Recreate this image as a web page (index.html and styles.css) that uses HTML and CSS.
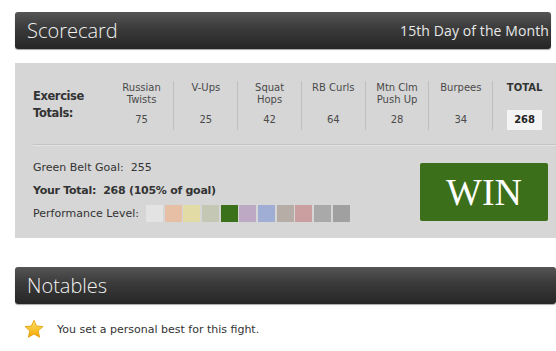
FILE: index.html
```html
<!DOCTYPE html>
<html>
<head>
<meta charset="utf-8">
<link rel="stylesheet" href="styles.css">
</head>
<body>
<div class="page">
  <div class="bar">
    <span class="bar-title">Scorecard</span>
    <span class="bar-date">15th Day of the Month</span>
  </div>
  <div class="panel">
    <div class="totals">
      <div class="label">Exercise<br>Totals:</div>
      <div class="col"><div class="head">Russian<br>Twists</div><div class="num">75</div></div>
      <div class="col sep"><div class="head">V-Ups</div><div class="num">25</div></div>
      <div class="col sep"><div class="head">Squat<br>Hops</div><div class="num">42</div></div>
      <div class="col sep"><div class="head">RB Curls</div><div class="num">64</div></div>
      <div class="col sep"><div class="head">Mtn Clm<br>Push Up</div><div class="num">28</div></div>
      <div class="col sep"><div class="head">Burpees</div><div class="num">34</div></div>
      <div class="col sep"><div class="head total-head">TOTAL</div><div class="num"><span class="total-box">268</span></div></div>
    </div>
    <div class="rule"></div>
    <div class="result">
      <div class="stats">
        <div class="line">Green Belt Goal:&nbsp; 255</div>
        <div class="line bold">Your Total:&nbsp; 268 (105% of goal)</div>
        <div class="line perf">Performance Level:
          <span class="swatches">
            <i style="background:#e3e3e3"></i><i style="background:#e6bfa5"></i><i style="background:#e3dba6"></i><i style="background:#c4c7b4"></i><i style="background:#3a711a"></i><i style="background:#bea9c5"></i><i style="background:#a0aed6"></i><i style="background:#b6aea6"></i><i style="background:#cb9f9f"></i><i style="background:#a9a9a9"></i><i style="background:#a0a0a0"></i>
          </span>
        </div>
      </div>
      <div class="win">WIN</div>
    </div>
  </div>
  <div class="bar bar2">
    <span class="bar-title">Notables</span>
  </div>
  <div class="notable">
    <svg class="star" width="20" height="20" viewBox="0 0 20 19">
      <defs>
        <linearGradient id="sg" x1="0" y1="0" x2="0" y2="1">
          <stop offset="0" stop-color="#ffe36a"/>
          <stop offset="1" stop-color="#f2a600"/>
        </linearGradient>
      </defs>
      <path d="M10 0.8 L12.6 6.5 L19 7.1 L14.2 11.3 L15.6 17.8 L10 14.5 L4.4 17.8 L5.8 11.3 L1 7.1 L7.4 6.5 Z" fill="url(#sg)" stroke="#e19a00" stroke-width="0.8" stroke-linejoin="round"/>
    </svg>
    <span>You set a personal best for this fight.</span>
  </div>
</div>
</body>
</html>
```
FILE: styles.css
```css
html, body { margin: 0; padding: 0; background: #fff; }
body { font-family: "DejaVu Sans", Verdana, sans-serif; color: #333; width: 556px; height: 351px; overflow: hidden; }
.page { padding-top: 12px; }
.bar {
  margin-left: 15px;
  width: 536px;
  height: 37px;
  box-sizing: border-box;
  border-radius: 3px;
  background: linear-gradient(#555 0%, #3a3a3a 45%, #262626 100%);
  box-shadow: 0 1px 1px rgba(0,0,0,0.35);
  display: flex;
  align-items: center;
  justify-content: space-between;
  padding: 0 2px 0 12px;
  color: #f2f2f2;
}
.bar-title { font-family: "Open Sans", sans-serif; font-size: 20px; font-weight: 300; }
.bar-date { font-family: "Open Sans", sans-serif; font-size: 14px; color: #e8e8e8; letter-spacing: 0.1px; }
.panel {
  margin-top: 14px;
  margin-left: 15px;
  width: 541px;
  height: 175px;
  background: #d6d6d6;
  box-sizing: border-box;
  padding-top: 18px;
}
.totals { display: flex; height: 49px; }
.label { width: 77px; padding-left: 18px; font-weight: bold; font-size: 11.5px; letter-spacing: -0.4px; line-height: 17px; color: #333; padding-top: 7px; }
.col { width: 64px; box-sizing: border-box; display: flex; flex-direction: column; align-items: center; font-size: 10px; color: #4a4a4a; }
.col.sep { border-left: 1px solid #bfbfbf; }
.head { height: 27px; text-align: center; line-height: 12px; padding-top: 1px; }
.total-head { font-weight: bold; color: #333; }
.num { line-height: 20px; padding-top: 1px; }
.total-box { display: inline-block; background: #f4f4f4; font-weight: bold; color: #222; padding: 0 7px; line-height: 20px; margin-top: -1px; }
.rule { margin: 14px 0 0 18px; height: 1px; background: #c4c4c4; border-bottom: 1px solid #e4e4e4; }
.result { display: flex; justify-content: space-between; padding-top: 10px; }
.stats { padding-left: 18px; font-size: 11px; color: #333; }
.line { height: 23px; line-height: 23px; }
.bold { font-weight: bold; letter-spacing: -0.27px; }
.perf { display: flex; align-items: center; }
.swatches { display: flex; gap: 1.7px; margin-left: 7px; }
.swatches i { display: block; width: 17px; height: 17px; }
.win {
  margin-top: 7px;
  margin-right: 8px;
  width: 128px;
  height: 58px;
  background: #3b6f1a;
  border-radius: 2px;
  color: #fff;
  font-family: "Liberation Serif", serif;
  font-size: 38px;
  display: flex;
  align-items: center;
  justify-content: center;
}
.bar2 { margin-top: 29px; width: 541px; height: 37px; }
.notable { display: flex; align-items: center; padding: 15px 0 0 24px; font-size: 11px; color: #333; }
.star { margin-right: 13px; }
```
